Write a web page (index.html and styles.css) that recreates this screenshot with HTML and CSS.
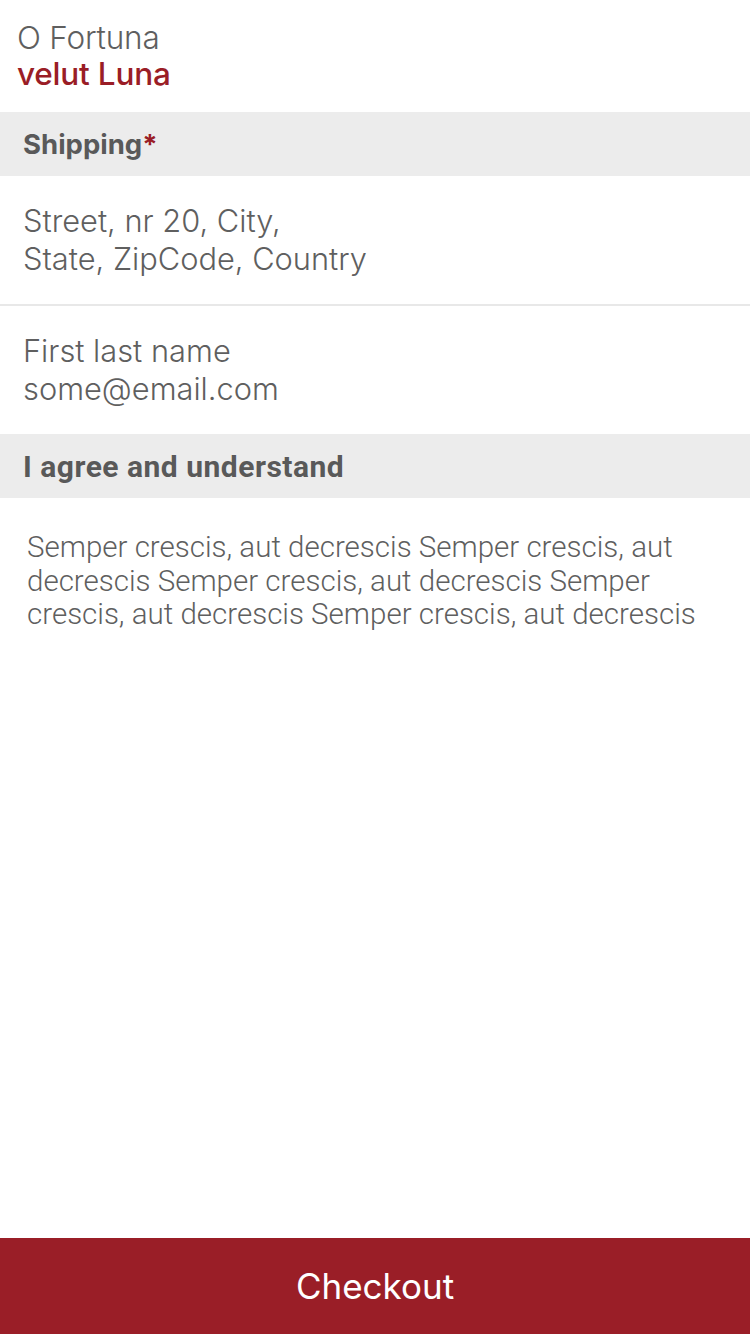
FILE: index.html
```html
<!DOCTYPE html>
<html lang="en">
<head>
<meta charset="utf-8">
<link rel="stylesheet" href="styles.css">
</head>
<body>
<div class="screen">
  <main class="content">
    <header class="title">
      <div class="title-main">O Fortuna</div>
      <div class="title-sub">velut Luna</div>
    </header>
    <div class="section-head">Shipping<span class="req">*</span></div>
    <div class="row row-divided">Street, nr 20, City,<br>State, ZipCode, Country</div>
    <div class="row">First last name<br>some@email.com</div>
    <div class="section-head section-head-narrow">I agree and understand</div>
    <p class="terms">Semper crescis, aut decrescis Semper crescis, aut decrescis Semper crescis, aut decrescis Semper crescis, aut decrescis Semper crescis, aut decrescis</p>
  </main>
  <button class="checkout">Checkout</button>
</div>
</body>
</html>
```
FILE: styles.css
```css
* { box-sizing: border-box; }
html, body { margin: 0; padding: 0; background: #fff; }
body { font-family: Inter, "Noto Sans", sans-serif; color: #5a5a5a; }
.screen { width: 750px; height: 1334px; display: flex; flex-direction: column; }
.content { flex: 1; }
.title { padding: 19px 17px 0; height: 112px; }
.title-main { font-size: 31.5px; font-weight: 300; line-height: 37px; color: #5f5f5f; letter-spacing: -0.2px; }
.title-sub { font-size: 31.5px; font-weight: 500; line-height: 36px; color: #9a1d26; letter-spacing: -0.2px; }
.section-head { height: 64px; background: #ececec; display: flex; align-items: center; padding: 0 23px; font-size: 27.5px; font-weight: 700; color: #595959; }
.section-head .req { color: #9a1d26; }
.section-head-narrow { font-family: Roboto, "Noto Sans", sans-serif; font-size: 30px; letter-spacing: 0.5px; }
.row { height: 128px; padding: 26px 23px 0; font-size: 30.8px; font-weight: 300; line-height: 38px; color: #5f5f5f; }
.row-divided { height: 130px; border-bottom: 2px solid #e8e8e8; }
.terms { margin: 0; padding: 33px 24px 0 27px; font-family: Roboto, "Noto Sans", sans-serif; font-size: 29.5px; font-weight: 300; line-height: 33.5px; color: #5f5f5f; letter-spacing: 0; }
.checkout { height: 96px; width: 100%; border: 0; margin: 0; background: #9a1e27; color: #fff; font-family: Inter, "Noto Sans", sans-serif; font-size: 35px; font-weight: 400; padding: 0; }
```
